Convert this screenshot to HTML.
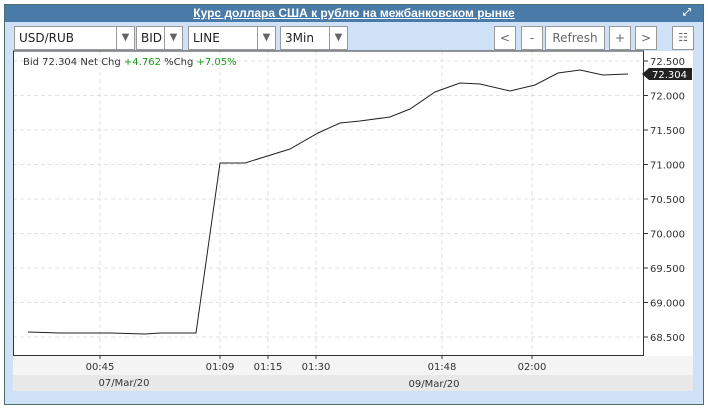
<!DOCTYPE html>
<html><head><meta charset="utf-8"><style>
*{margin:0;padding:0;box-sizing:border-box}
body{width:708px;height:409px;background:#fff;font-family:"DejaVu Sans","Liberation Sans",sans-serif;position:relative;overflow:hidden}
.outer{position:absolute;left:4px;top:4px;width:700px;height:401px;background:#cfe1f7;border:1px solid #4d6f6a}
.hdr{position:absolute;left:0;top:0;width:698px;height:17px;background:#4a7aa8;text-align:center;font:bold 12px "Liberation Sans",sans-serif;color:#fff;line-height:16px}
.hdr span{text-decoration:underline}
.sel{position:absolute;top:21px;height:24px;background:#fff;border:1px solid #999;font-size:12px;color:#222;line-height:22px;padding-left:4px}
.sel .ar{position:absolute;right:0;top:0;width:18px;height:22px;border-left:1px solid #999;color:#666;font-size:10px;text-align:center;line-height:22px}
.btn{position:absolute;top:21px;height:24px;background:#fff;border:1px solid #999;font-size:12px;color:#666;text-align:center;line-height:22px}
</style></head><body>
<div class="outer">
<div class="hdr"><span>Курс доллара США к рублю на межбанковском рынке</span><span style="position:absolute;right:12px;top:0;text-decoration:none;font-size:10px">⤢</span></div>
<div class="sel" style="left:9px;width:121px">USD/RUB<div class="ar">▼</div></div>
<div class="sel" style="left:131px;width:47px">BID<div class="ar">▼</div></div>
<div class="sel" style="left:183px;width:88px">LINE<div class="ar">▼</div></div>
<div class="sel" style="left:275px;width:68px">3Min<div class="ar">▼</div></div>
<div class="btn" style="left:489px;width:22px">&lt;</div>
<div class="btn" style="left:516px;width:22px">-</div>
<div class="btn" style="left:540px;width:60px">Refresh</div>
<div class="btn" style="left:604px;width:22px">+</div>
<div class="btn" style="left:630px;width:22px">&gt;</div>
<div class="btn" style="left:667px;width:22px;font-size:11px">☷</div>
</div>
<svg style="position:absolute;left:0;top:0" width="708" height="409" font-family="DejaVu Sans,sans-serif" font-size="10">
<rect x="13" y="51" width="680" height="340" fill="#fff"/>
<rect x="13" y="356" width="680" height="19" fill="#f4f4f4"/>
<rect x="13" y="375" width="680" height="16" fill="#e8e8e8"/>
<g stroke="#e2e2e2" stroke-dasharray="4,3">
<line x1="13" x2="643" y1="61" y2="61"/><line x1="13" x2="643" y1="95.5" y2="95.5"/><line x1="13" x2="643" y1="130" y2="130"/><line x1="13" x2="643" y1="164.5" y2="164.5"/><line x1="13" x2="643" y1="199" y2="199"/><line x1="13" x2="643" y1="233.5" y2="233.5"/><line x1="13" x2="643" y1="268" y2="268"/><line x1="13" x2="643" y1="302.5" y2="302.5"/><line x1="13" x2="643" y1="337" y2="337"/>
<line x1="100" x2="100" y1="51" y2="355"/><line x1="220" x2="220" y1="51" y2="355"/><line x1="268" x2="268" y1="51" y2="355"/><line x1="316" x2="316" y1="51" y2="355"/><line x1="442" x2="442" y1="51" y2="355"/><line x1="532" x2="532" y1="51" y2="355"/>
</g>
<path d="M13.5 51 V355.5 H643.5 V51 Z" fill="none" stroke="#333"/>
<g stroke="#333"><line x1="100" x2="100" y1="355" y2="359"/><line x1="220" x2="220" y1="355" y2="359"/><line x1="268" x2="268" y1="355" y2="359"/><line x1="316" x2="316" y1="355" y2="359"/><line x1="442" x2="442" y1="355" y2="359"/><line x1="532" x2="532" y1="355" y2="359"/>
<line x1="643" x2="648" y1="61" y2="61"/><line x1="643" x2="648" y1="95.5" y2="95.5"/><line x1="643" x2="648" y1="130" y2="130"/><line x1="643" x2="648" y1="164.5" y2="164.5"/><line x1="643" x2="648" y1="199" y2="199"/><line x1="643" x2="648" y1="233.5" y2="233.5"/><line x1="643" x2="648" y1="268" y2="268"/><line x1="643" x2="648" y1="302.5" y2="302.5"/><line x1="643" x2="648" y1="337" y2="337"/></g>
<polyline fill="none" stroke="#222" stroke-width="1" points="28,332 60,333 110,333 145,334 160,333 196,333 220,163 245,163 290,149 318,133 340,123 360,121 390,117 410,109 435,92 460,83 480,84 510,91 535,85 558,73 580,70 603,75 628,74"/>
<g fill="#333" font-size="10">
<text x="650" y="65">72.500</text><text x="650" y="99.5">72.000</text><text x="650" y="134">71.500</text><text x="650" y="168.5">71.000</text><text x="650" y="203">70.500</text><text x="650" y="237.5">70.000</text><text x="650" y="272">69.500</text><text x="650" y="306.5">69.000</text><text x="650" y="341">68.500</text>
<g text-anchor="middle"><text x="100" y="370">00:45</text><text x="220" y="370">01:09</text><text x="268" y="370">01:15</text><text x="316" y="370">01:30</text><text x="442" y="370">01:48</text><text x="532" y="370">02:00</text>
<text x="124" y="386">07/Mar/20</text><text x="434" y="387">09/Mar/20</text></g>
</g>
<path d="M642 74 L649 68 H692 V80 H649 Z" fill="#222"/>
<text x="652" y="78" fill="#fff" font-size="10">72.304</text>
<text x="23" y="65" font-size="10" fill="#333">Bid 72.304 Net Chg <tspan fill="#1a9a1a">+4.762</tspan> %Chg <tspan fill="#1a9a1a">+7.05%</tspan></text>
</svg>
</body></html>
